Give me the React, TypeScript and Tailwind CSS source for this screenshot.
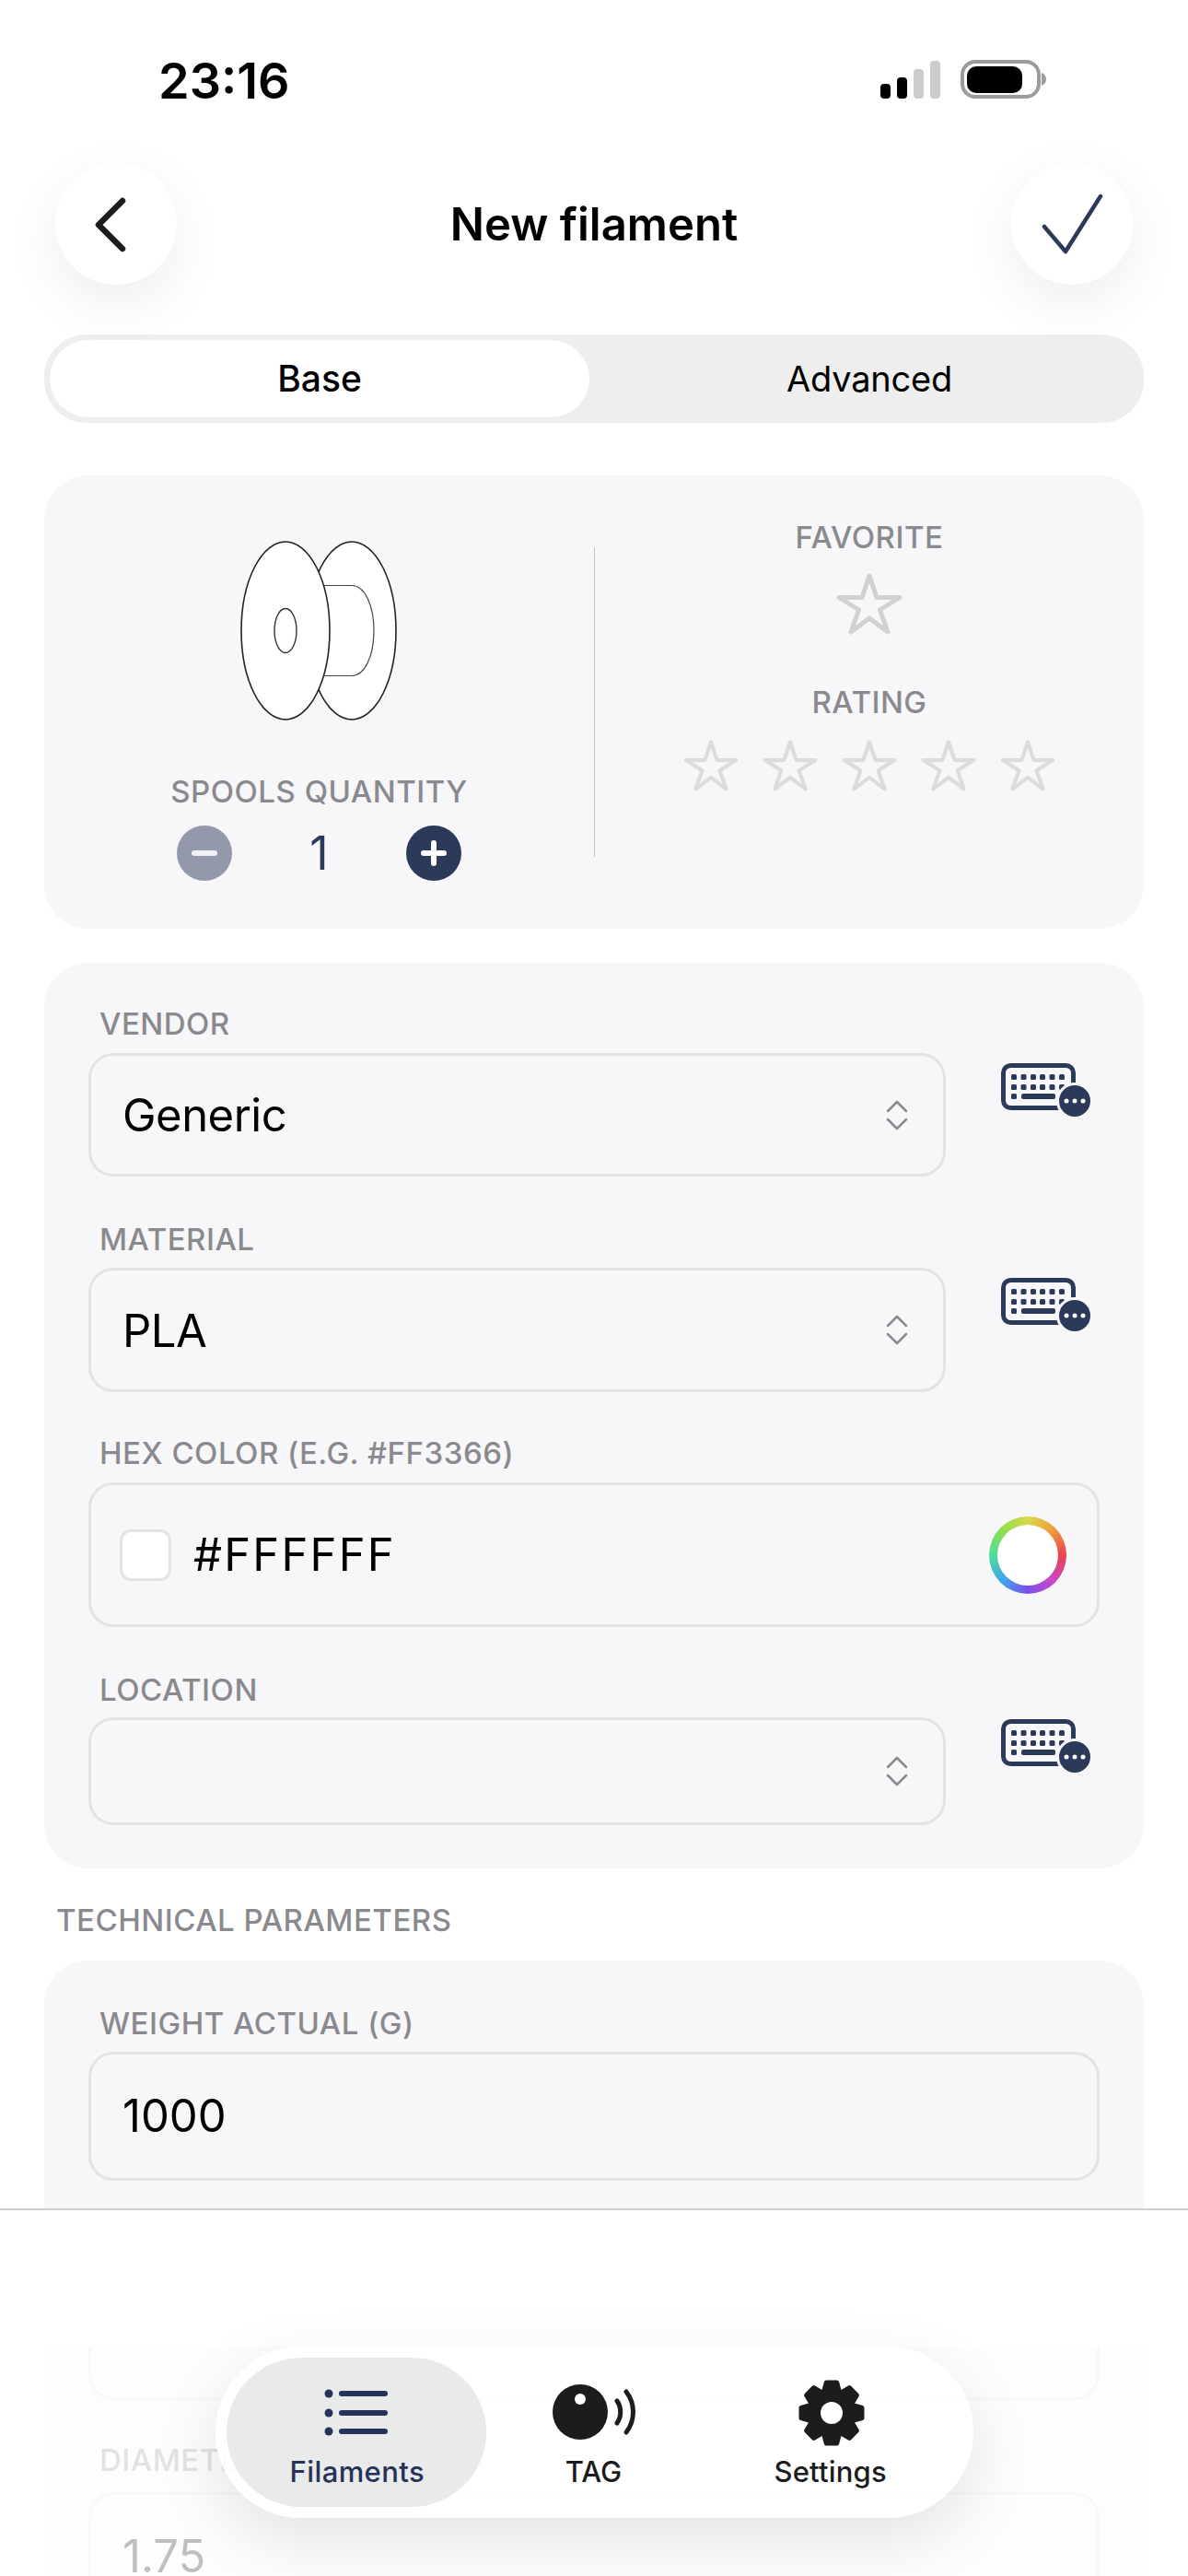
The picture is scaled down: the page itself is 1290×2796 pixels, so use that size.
import type { ReactNode } from "react";

const navy = "#2c3a5a";

const Star = ({ size, color }: { size: number; color: string }) => (
  <svg width={size} height={(size * 68) / 72} viewBox="0 0 72 68" fill="none">
    <path
      d="M36 3L44 26.5H69L47.5 40L56 64L36 49L16 64L24.5 40L3 26.5H28Z"
      stroke={color}
      strokeWidth="5"
      strokeLinejoin="round"
    />
  </svg>
);

const Chevrons = () => (
  <svg width="24" height="33" viewBox="0 0 24 33" fill="none" className="shrink-0">
    <path
      d="M2 12L12 2L22 12M2 21L12 31L22 21"
      stroke="#8a8a8e"
      strokeWidth="2.5"
      strokeLinecap="round"
      strokeLinejoin="round"
    />
  </svg>
);

const KeyboardIcon = ({ className }: { className: string }) => (
  <svg width="97" height="58" viewBox="0 0 97 58" fill="none" className={className}>
    <rect x="2.5" y="2.5" width="76" height="46" rx="8" stroke={navy} strokeWidth="5" />
    {[14, 24.5, 35, 45, 55.5, 66].map((x) => (
      <g key={x} fill={navy}>
        <rect x={x - 3} y="12" width="6" height="6" rx="1.5" />
        <rect x={x - 3} y="23" width="6" height="6" rx="1.5" />
      </g>
    ))}
    <rect x="11" y="33" width="6" height="6" rx="1.5" fill={navy} />
    <rect x="22" y="33" width="37" height="6" rx="2" fill={navy} />
    <circle cx="80" cy="41" r="18.5" fill={navy} stroke="#f7f7f9" strokeWidth="3" />
    <circle cx="71" cy="41" r="2.5" fill="#fff" />
    <circle cx="80" cy="41" r="2.5" fill="#fff" />
    <circle cx="89" cy="41" r="2.5" fill="#fff" />
  </svg>
);

const gearPath = (() => {
  const pts: string[] = [];
  for (let i = 0; i < 8; i++) {
    const a = (i * Math.PI) / 4 - Math.PI / 2;
    const spots: [number, number][] = [
      [24, -0.36],
      [33.5, -0.17],
      [33.5, 0.17],
      [24, 0.36],
    ];
    spots.forEach(([r, d]) => {
      pts.push(`${(38 + r * Math.cos(a + d)).toFixed(1)} ${(38 + r * Math.sin(a + d)).toFixed(1)}`);
    });
  }
  return "M" + pts.join("L") + "Z";
})();

const Label = ({ children, className = "" }: { children: ReactNode; className?: string }) => (
  <div className={`h-[40px] leading-[40px] text-[33px] font-medium text-[#8a8a8e] tracking-[0.5px] ${className}`}>
    {children}
  </div>
);

type BoxProps = { height: string; top?: string; wide?: boolean; children?: ReactNode };

const Box = ({ height, top = "mt-[12px]", wide, children }: BoxProps) => (
  <div
    className={`${height} ${top} ${wide ? "w-[1098px]" : "w-[931px]"} flex items-center justify-between rounded-[27px] border-[3px] border-[#e3e3e6] pl-[34px] pr-[38px] text-[49px] text-black`}
  >
    {children}
  </div>
);

type SelectRowProps = { value?: string; height: string; top?: string; iconTop: string };

const SelectRow = ({ value, height, top, iconTop }: SelectRowProps) => (
  <div className="flex items-start">
    <Box height={height} top={top}>
      <span className="mt-[2px] tracking-[-0.5px]">{value}</span>
      <Chevrons />
    </Box>
    <KeyboardIcon className={`ml-[60px] ${iconTop}`} />
  </div>
);

export default function App() {
  return (
    <div className="relative h-[2796px] w-[1290px] overflow-hidden bg-white pt-[65px] font-['Inter',sans-serif]">
      {/* status bar */}
      <div className="flex h-[42px] items-center justify-between pl-[172px] pr-[154px]">
        <span className="mt-[3px] text-[54px] font-semibold leading-[42px] text-black">23:16</span>
        <svg width="180" height="42" viewBox="0 0 180 42" fill="none">
          <rect x="0" y="26" width="11" height="16" rx="4" fill="#000" />
          <rect x="18" y="19" width="11" height="23" rx="4" fill="#000" />
          <rect x="36" y="10" width="11" height="32" rx="4" fill="#ccc" />
          <rect x="54" y="1" width="11" height="41" rx="4" fill="#ccc" />
          <rect x="89" y="2" width="83" height="38" rx="14" fill="#fff" stroke="#9b9b9b" strokeWidth="4" />
          <rect x="94" y="7" width="60" height="29" rx="10" fill="#000" />
          <path d="M175 14c3 1 5 4 5 7s-2 6-5 7z" fill="#9b9b9b" />
        </svg>
      </div>

      {/* header */}
      <div className="mt-[70px] flex items-center justify-between px-[60px]">
        <button className="h-[132px] w-[132px] rounded-full bg-white shadow-[0_20px_60px_rgba(0,0,0,0.07)]">
          <svg width="132" height="132" viewBox="0 0 132 132" fill="none">
            <path d="M73 41L47 67L73 93" stroke="#1c1c1e" strokeWidth="6.5" strokeLinecap="round" strokeLinejoin="round" />
          </svg>
        </button>
        <h1 className="mt-[2px] text-[49px] font-semibold text-black">New filament</h1>
        <button className="h-[132px] w-[132px] rounded-full bg-white shadow-[0_20px_60px_rgba(0,0,0,0.07)]">
          <svg width="132" height="132" viewBox="0 0 132 132" fill="none">
            <path d="M36 69L59 96L97 36" stroke={navy} strokeWidth="4.5" strokeLinecap="round" strokeLinejoin="round" />
          </svg>
        </button>
      </div>

      {/* tabs */}
      <div className="mx-[48px] mt-[54px] flex h-[96px] rounded-[46px] bg-[#eeeeee] p-[6px] text-black">
        <div className="flex w-[586px] items-center justify-center rounded-[42px] bg-white text-[39px] font-medium">Base</div>
        <div className="flex flex-1 items-center justify-center pl-[12px] text-[38px] tracking-[-0.2px]">Advanced</div>
      </div>

      {/* spool + rating card */}
      <div className="mx-[48px] mt-[57px] flex h-[492px] rounded-[48px] bg-[#f7f7f9]">
        <div className="flex w-[597px] flex-col items-center pt-[71px]">
          <svg width="172" height="195" viewBox="0 0 172 195" fill="none" className="-ml-[2px]">
            <ellipse cx="122" cy="97.5" rx="48" ry="96.5" fill="#fff" stroke="#222" strokeWidth="1.6" />
            <path d="M80 48.5H122C136 48.5 146 70 146 97.5C146 125 136 146.5 122 146.5H80" stroke="#444" strokeWidth="1.2" />
            <ellipse cx="50" cy="97.5" rx="48" ry="96.5" fill="#fff" stroke="#222" strokeWidth="1.6" />
            <ellipse cx="50" cy="97.5" rx="12" ry="24" stroke="#333" strokeWidth="1.4" />
          </svg>
          <Label className="mt-[57px]">SPOOLS QUANTITY</Label>
          <div className="mt-[17px] flex w-[309px] items-center justify-between">
            <button className="flex h-[60px] w-[60px] items-center justify-center rounded-full bg-[#9498ab]">
              <span className="h-[6px] w-[28px] rounded-full bg-[#f1f1f4]" />
            </button>
            <span className="text-[50px] leading-[60px] text-[#2c3a5a]">1</span>
            <button className="relative flex h-[60px] w-[60px] items-center justify-center rounded-full bg-[#2c3a5a]">
              <span className="h-[6px] w-[28px] rounded-full bg-white" />
              <span className="absolute h-[28px] w-[6px] rounded-full bg-white" />
            </button>
          </div>
        </div>
        <div className="mt-[78px] h-[336px] w-[1px] bg-[#c8c8ca]" />
        <div className="flex flex-1 flex-col items-center pt-[47px]">
          <Label>FAVORITE</Label>
          <div className="mt-[19px]">
            <Star size={72} color="#d1d1d2" />
          </div>
          <Label className="mt-[52px]">RATING</Label>
          <div className="mt-[21px] flex gap-[26px]">
            {[1, 2, 3, 4, 5].map((n) => (
              <Star key={n} size={60} color="#dcdcde" />
            ))}
          </div>
        </div>
      </div>

      {/* main fields */}
      <div className="mx-[48px] mt-[37px] rounded-[48px] bg-[#f7f7f9] px-[48px] pb-[47px] pt-[46px]">
        <Label className="pl-[12px]">VENDOR</Label>
        <SelectRow value="Generic" height="h-[134px]" iconTop="mt-[23px]" />
        <Label className="mt-[48px] pl-[12px]">MATERIAL</Label>
        <SelectRow value="PLA" height="h-[135px]" top="mt-[11px]" iconTop="mt-[22px]" />
        <Label className="mt-[46px] pl-[12px]">HEX COLOR (E.G. #FF3366)</Label>
        <Box height="h-[157px]" wide>
          <div className="-ml-[3px] flex items-center">
            <span className="h-[56px] w-[56px] rounded-[12px] border-[3px] border-[#e3e3e6] bg-white" />
            <span className="ml-[24px] tracking-[2.2px]">#FFFFFF</span>
          </div>
          <span className="-mr-[5px] flex h-[84px] w-[84px] items-center justify-center rounded-full bg-[conic-gradient(#d6d84a,#ee9d3c,#ee3f4f,#c947c9,#7c4fe8,#3fa6ee,#4fdc9a,#8fe04f,#d6d84a)]">
            <span className="h-[66px] w-[66px] rounded-full bg-white" />
          </span>
        </Box>
        <Label className="mt-[48px] pl-[12px]">LOCATION</Label>
        <SelectRow height="h-[117px]" top="mt-[10px]" iconTop="mt-[12px]" />
      </div>

      <Label className="mt-[36px] pl-[61px]">TECHNICAL PARAMETERS</Label>

      {/* technical card, runs on under the tab bar */}
      <div className="mx-[48px] mt-[24px] rounded-[48px] bg-[#f7f7f9] px-[48px] pb-[48px] pt-[48px]">
        <Label className="pl-[12px]">WEIGHT ACTUAL (G)</Label>
        <Box height="h-[140px]" top="mt-[11px]" wide>
          <span>1000</span>
        </Box>
        <div className="h-[88px]" />
        <Box height="h-[138px]" wide />
        <Label className="mt-[45px] pl-[12px]">DIAMETER (MM)</Label>
        <Box height="h-[140px]" top="mt-[15px]" wide>
          <span>1.75</span>
        </Box>
      </div>

      {/* overlays */}
      <div className="absolute left-0 top-[2397px] h-[150px] w-full border-t-2 border-[#cfcfcf] bg-white" />
      <div className="absolute left-0 top-[2547px] h-[249px] w-full bg-white/75" />

      <nav className="absolute left-[234px] top-[2547px] flex h-[186px] w-[823px] rounded-[93px] bg-white/90 p-[12px] text-[31px] font-medium text-[#1c1c1e] shadow-[0_24px_70px_rgba(0,0,0,0.1)]">
        <div className="flex w-[282px] flex-col items-center rounded-[81px] bg-[#e9eaea] pt-[22px] text-[#25335a]">
          <svg width="76" height="76" viewBox="0 0 76 76" fill="none">
            <g fill="#25335a">
              <circle cx="8" cy="17" r="4.5" />
              <circle cx="8" cy="38" r="4.5" />
              <circle cx="8" cy="58" r="4.5" />
              <rect x="19" y="14" width="53" height="6" rx="3" />
              <rect x="19" y="35" width="53" height="6" rx="3" />
              <rect x="19" y="55" width="53" height="6" rx="3" />
            </g>
          </svg>
          <span className="ml-[2px] mt-[6px] leading-[40px] tracking-[0.4px]">Filaments</span>
        </div>
        <div className="flex w-[234px] flex-col items-center pt-[22px]">
          <svg width="92" height="76" viewBox="0 0 92 76" fill="none" className="ml-[3px]">
            <circle cx="30" cy="37" r="30" fill="#1c1c1e" />
            <circle cx="30" cy="23" r="6" fill="#fff" />
            <path d="M70 25C75 32 75 42 70 49" stroke="#1c1c1e" strokeWidth="5" strokeLinecap="round" />
            <path d="M80 15C90 28 90 46 80 59" stroke="#1c1c1e" strokeWidth="5" strokeLinecap="round" />
          </svg>
          <span className="mt-[6px] leading-[40px]">TAG</span>
        </div>
        <div className="flex w-[284px] flex-col items-center pt-[22px]">
          <svg width="76" height="76" viewBox="0 0 76 76" fill="none">
            <path d={gearPath} fill="#1c1c1e" stroke="#1c1c1e" strokeWidth="5" strokeLinejoin="round" />
            <circle cx="38" cy="38" r="12" fill="#fff" />
          </svg>
          <span className="-ml-[3px] mt-[6px] leading-[40px] tracking-[0.2px]">Settings</span>
        </div>
      </nav>
    </div>
  );
}
